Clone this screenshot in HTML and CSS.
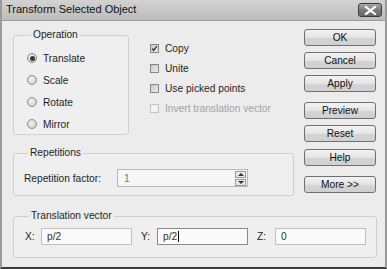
FILE: index.html
```html
<!DOCTYPE html>
<html>
<head>
<meta charset="utf-8">
<link rel="stylesheet" href="styles.css">
</head>
<body>
<div class="window">
  <div class="titlebar">
    <span class="title">Transform Selected Object</span>
    <span class="close"><svg width="13" height="9" viewBox="0 0 13 9"><path d="M2 1 L11 8 M11 1 L2 8" stroke="#fff" stroke-width="2.2" stroke-linecap="square"/></svg></span>
  </div>
  <div class="content">
    <div class="main">
      <div class="left">
        <div class="toprow">
          <fieldset class="group op">
            <legend>Operation</legend>
            <div class="opt"><span class="radio on"></span>Translate</div>
            <div class="opt"><span class="radio"></span>Scale</div>
            <div class="opt"><span class="radio"></span>Rotate</div>
            <div class="opt"><span class="radio"></span>Mirror</div>
          </fieldset>
          <div class="checks">
            <div class="chk"><span class="box"><svg width="9" height="9" viewBox="0 0 9 9"><path d="M1.5 4.5 L3.5 7 L7.5 1.5" stroke="#333" stroke-width="1.6" fill="none"/></svg></span>Copy</div>
            <div class="chk"><span class="box"></span>Unite</div>
            <div class="chk"><span class="box"></span>Use picked points</div>
            <div class="chk disabled"><span class="box"></span>Invert translation vector</div>
          </div>
        </div>
        <fieldset class="group rep">
          <legend>Repetitions</legend>
          <div class="reprow">
            <span class="lbl">Repetition factor:</span>
            <div class="spin">
              <span class="val">1</span>
              <div class="arrows">
                <span class="sbtn"><svg width="6" height="3" viewBox="0 0 6 3"><path d="M0 3 L3 0 L6 3 Z" fill="#333"/></svg></span>
                <span class="sbtn"><svg width="6" height="3" viewBox="0 0 6 3"><path d="M0 0 L3 3 L6 0 Z" fill="#333"/></svg></span>
              </div>
            </div>
          </div>
        </fieldset>
      </div>
      <div class="buttons">
        <div class="btn">OK</div>
        <div class="btn">Cancel</div>
        <div class="btn">Apply</div>
        <div class="btn sep">Preview</div>
        <div class="btn">Reset</div>
        <div class="btn sep2">Help</div>
        <div class="btn sep3">More &gt;&gt;</div>
      </div>
    </div>
    <fieldset class="group trans">
      <legend>Translation vector</legend>
      <div class="vecrow">
        <span class="vl">X:</span><span class="field">p/2</span>
        <span class="vl vy">Y:</span><span class="field focus">p/2<span class="caret"></span></span>
        <span class="vl vz">Z:</span><span class="field">0</span>
      </div>
    </fieldset>
  </div>
</div>
</body>
</html>
```
FILE: styles.css
```css
* { box-sizing: border-box; }
html, body { margin: 0; padding: 0; background: #ececec; }
body { font-family: "Liberation Sans", Arial, sans-serif; font-size: 10.2px; color: #1e1e1e; }
.window {
  width: 387px; height: 269px; overflow: hidden;
  background: #ececec;
  border-left: 2px solid #9a9a9a; border-right: 2px solid #9a9a9a;
  border-bottom: 2px solid #3a3a3a;
  display: flex; flex-direction: column;
}
.titlebar {
  height: 21px; flex: none;
  background: linear-gradient(#d2d2d2, #bcbcbc);
  border-bottom: 1px solid #9c9c9c;
  display: flex; align-items: center; justify-content: space-between;
  padding: 0 3px 2px 4px;
}
.title { font-size: 11px; color: #111; }
.close {
  width: 24px; height: 14px; border: 1px solid #3c3c3c; border-radius: 3px;
  background: linear-gradient(#a8a8a8, #777 55%, #6a6a6a);
  display: flex; align-items: center; justify-content: center;
  margin-top: 2px;
}
.content { padding: 8px 9px 0 11px; flex: 1; display: flex; flex-direction: column; }
.main { display: flex; }
.left { width: 281px; display: flex; flex-direction: column; }
.toprow { display: flex; }
.group {
  margin: 0; border: 1px solid #cfcfcf; border-radius: 3px;
  background: #efefef;
}
.group legend { padding: 0 2px; margin-left: 4px; line-height: 12px; }
.op { width: 116px; height: 106px; padding: 6px 0 0 13px; }
.opt { height: 22px; display: flex; align-items: center; }
.radio {
  width: 10px; height: 10px; border-radius: 50%; border: 1px solid #8c8c8c;
  background: radial-gradient(circle at 40% 40%, #f4f4f4, #c4c4c4);
  margin-right: 6px; display: flex; align-items: center; justify-content: center;
}
.radio.on::after { content: ""; width: 5px; height: 5px; border-radius: 50%; background: #3a3a3a; }
.checks { margin-left: 21px; padding-top: 9px; }
.chk { height: 20px; display: flex; align-items: center; }
.box {
  width: 9px; height: 9px; border: 1px solid #858585;
  background: linear-gradient(135deg, #c9c9c9, #ececec);
  margin-right: 6px; display: flex; align-items: center; justify-content: center;
}
.box svg { display: block; }
.chk.disabled { color: #a3a3a3; }
.chk.disabled .box { border-color: #c4c4c4; background: #f2f2f2; }
.rep { height: 49px; margin-top: 12px; padding: 4px 0 0 10px; }
.reprow { display: flex; align-items: center; height: 30px; }
.lbl { width: 93px; }
.spin {
  width: 131px; height: 18px; border: 1px solid #b8b8b8; background: #f7f7f7;
  display: flex; align-items: center; justify-content: space-between; padding-left: 6px;
}
.val { color: #777; }
.arrows { display: flex; flex-direction: column; gap: 1px; padding: 1px; }
.sbtn {
  width: 11px; height: 7px; border: 1px solid #9a9a9a; background: #e8e8e8;
  display: flex; align-items: center; justify-content: center;
}
.sbtn svg { display: block; }
.buttons { margin-left: 10px; padding-top: 0; display: flex; flex-direction: column; }
.btn {
  width: 72px; height: 17px; border: 1px solid #707070; border-radius: 3px;
  background: linear-gradient(#f3f3f3, #e4e4e4 50%, #d4d4d4 51%, #d0d0d0);
  display: flex; align-items: center; justify-content: center;
  margin-bottom: 6px; color: #111;
}
.btn.sep { margin-top: 4px; }
.btn.sep2 { margin-top: 1px; }
.btn.sep3 { margin-top: 4px; }
.trans { height: 48px; margin-top: 11px; width: 364px; padding: 6px 0 0 11px; }
.vecrow { display: flex; align-items: center; }
.vl { width: 16px; }
.vy { margin-left: 9px; }
.vz { margin-left: 9px; width: 18px; }
.field {
  width: 91px; height: 17px; border: 1px solid #c0c0c0; background: #fafafa;
  display: flex; align-items: center; padding-left: 5px; color: #333;
}
.field.focus { border-color: #8a8a8a; }
.caret { width: 1px; height: 11px; background: #111; margin-left: 1px; }
```
